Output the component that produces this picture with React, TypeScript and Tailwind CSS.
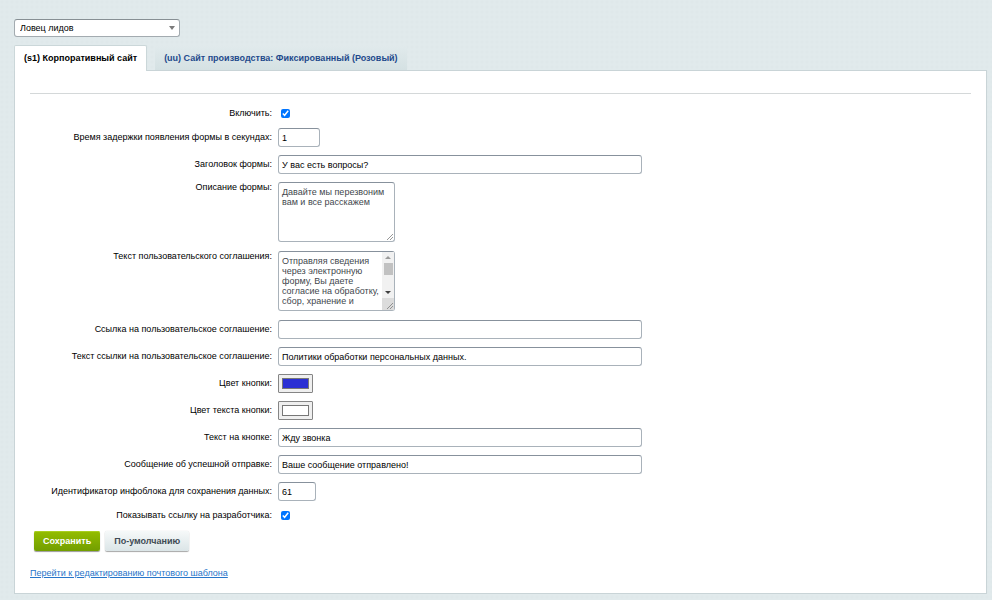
import { useId, type ReactNode } from "react";

const boxClass =
  "block rounded-[3px] border border-[#a9b2ba] border-t-[#87919c] bg-white text-[9px] outline-none";

function Row({ label, id, tall, children }: { label: string; id: string; tall?: boolean; children: ReactNode }) {
  return (
    <div className={`grid grid-cols-[242px_minmax(0,1fr)] gap-1.5 ${tall ? "items-start" : "items-center"}`}>
      <label htmlFor={id} className="text-right leading-[11px] whitespace-nowrap">
        {label}
      </label>
      {children}
    </div>
  );
}

function CheckRow({ label }: { label: string }) {
  const id = useId();
  return (
    <Row label={label} id={id}>
      <div className="flex h-[13px] items-center pl-[3px]">
        <input id={id} type="checkbox" defaultChecked className="m-0 size-[9px] accent-[#0075ff]" />
      </div>
    </Row>
  );
}

function TextRow({ label, value, width = "w-full max-w-[364px]" }: { label: string; value: string; width?: string }) {
  const id = useId();
  return (
    <Row label={label} id={id}>
      <input
        id={id}
        type="text"
        defaultValue={value}
        className={`${boxClass} ${width} h-[19px] px-[3px] leading-[11px] text-black`}
      />
    </Row>
  );
}

function AreaRow({ label, value, scroll }: { label: string; value: string; scroll?: boolean }) {
  const id = useId();
  return (
    <Row label={label} id={id} tall>
      <div className="relative h-[61px] w-[117px]">
        <textarea
          id={id}
          defaultValue={value}
          className={`${boxClass} h-[60px] w-full resize-none overflow-hidden py-1 pl-[3px] leading-[10px] text-[#42474d] ${
            scroll ? "pr-[14px]" : "pr-[3px]"
          }`}
        />
        {scroll && (
          <div className="absolute top-px right-px flex h-[46px] w-3 flex-col items-center bg-[#f1f1f1]">
            <svg width="12" height="11" viewBox="0 0 12 11">
              <path d="M3 7h6L6 4z" fill="#9a9a9a" />
            </svg>
            <div className="h-3 w-[9px] bg-[#c1c1c1]" />
            <svg width="12" height="11" viewBox="0 0 12 11" className="mt-auto">
              <path d="M3 4h6L6 7z" fill="#404040" />
            </svg>
          </div>
        )}
        <svg
          width="12"
          height="12"
          viewBox="0 0 12 12"
          className={`absolute right-px bottom-[2px] ${scroll ? "bg-[#dcdcdc]" : ""}`}
        >
          <path d="M5 11l6-6M8 11l3-3" stroke="#7d7d7d" strokeWidth="0.8" />
        </svg>
      </div>
    </Row>
  );
}

function ColorRow({ label, value }: { label: string; value: string }) {
  const id = useId();
  return (
    <Row label={label} id={id}>
      <input
        id={id}
        type="color"
        defaultValue={value}
        className="block h-[19px] w-[35px] appearance-none rounded-[1px] border border-[#858585] bg-[#efefef] px-[3px] py-[3px] [&::-webkit-color-swatch]:border-[#777777] [&::-webkit-color-swatch-wrapper]:p-0"
      />
    </Row>
  );
}

export default function App() {
  return (
    <div className="min-h-screen bg-[#e1eaec] bg-[radial-gradient(circle_at_2px_2px,#dfe8ea_1px,transparent_2px)] bg-[size:5px_5px] pt-[19px] pr-[5px] pb-1.5 pl-[14px] font-['Liberation_Sans',Arial,sans-serif] text-[9px] leading-[11px] text-black">
      <div className="relative w-[166px]">
        <select
          aria-label="Модуль"
          className="block h-[18px] w-full appearance-none rounded-[3px] border border-[#a3abb0] border-t-[#878f94] bg-white pr-4 pl-[5px] text-[9px] leading-[11px] outline-none"
        >
          <option>Ловец лидов</option>
        </select>
        <svg width="6" height="4" viewBox="0 0 6 4" className="pointer-events-none absolute top-[7px] right-[5px]">
          <path d="M0 0h6L3 4z" fill="#7b7b7b" />
        </svg>
      </div>

      <div role="tablist" className="mt-2 flex items-end gap-2">
        <button
          role="tab"
          aria-selected="true"
          className="z-10 -mb-px h-[26px] rounded-t-[2px] border border-b-0 border-[#cbd7d9] bg-white px-[9px] text-[9px] font-bold whitespace-nowrap"
        >
          (s1) Корпоративный сайт
        </button>
        <button
          role="tab"
          aria-selected="false"
          className="h-[24px] bg-linear-to-b from-[#e1eaec] to-[#d5e1e3] px-[9px] text-[9px] font-bold whitespace-nowrap text-[#1f4a8c]"
        >
          (uu) Сайт производства: Фиксированный (Розовый)
        </button>
      </div>

      <main className="border border-[#c9d4d7] bg-white px-[15px] pb-[14px]">
        <hr className="mt-[22px] border-[#d4d8d9]" />
        <form className="mt-[13px]" onSubmit={(e) => e.preventDefault()}>
          <div className="flex flex-col gap-2">
            <CheckRow label="Включить:" />
            <TextRow label="Время задержки появления формы в секундах:" value="1" width="w-[42px]" />
            <TextRow label="Заголовок формы:" value="У вас есть вопросы?" />
            <AreaRow label="Описание формы:" value="Давайте мы перезвоним вам и все расскажем" />
            <AreaRow
              label="Текст пользовательского соглашения:"
              value="Отправляя сведения через электронную форму, Вы даете согласие на обработку, сбор, хранение и"
              scroll
            />
            <TextRow label="Ссылка на пользовательское соглашение:" value="" />
            <TextRow label="Текст ссылки на пользовательское соглашение:" value="Политики обработки персональных данных." />
            <ColorRow label="Цвет кнопки:" value="#2a2fd4" />
            <ColorRow label="Цвет текста кнопки:" value="#ffffff" />
            <TextRow label="Текст на кнопке:" value="Жду звонка" />
            <TextRow label="Сообщение об успешной отправке:" value="Ваше сообщение отправлено!" />
            <TextRow label="Идентификатор инфоблока для сохранения данных:" value="61" width="w-[38px]" />
            <CheckRow label="Показывать ссылку на разработчика:" />
          </div>
          <div className="mt-[9px] flex gap-[5px] pl-1">
            <button
              type="submit"
              className="h-[20px] rounded-[2px] bg-linear-to-b from-[#94bd00] to-[#729e00] px-[9px] text-[9px] font-bold text-white shadow-[0_1px_1px_#00000066,inset_0_1px_0_#a9cf20]"
            >
              Сохранить
            </button>
            <button
              type="button"
              className="h-[20px] rounded-[2px] bg-linear-to-b from-[#f6f9f9] to-[#dbe5e7] px-[9px] text-[9px] font-bold text-[#3f4b54] shadow-[0_1px_1px_#00000055,0_0_1px_#00000033]"
            >
              По-умолчанию
            </button>
          </div>
        </form>
        <a href="#template" className="mt-[17px] inline-block text-[#2775c9] underline">
          Перейти к редактированию почтового шаблона
        </a>
      </main>
    </div>
  );
}
